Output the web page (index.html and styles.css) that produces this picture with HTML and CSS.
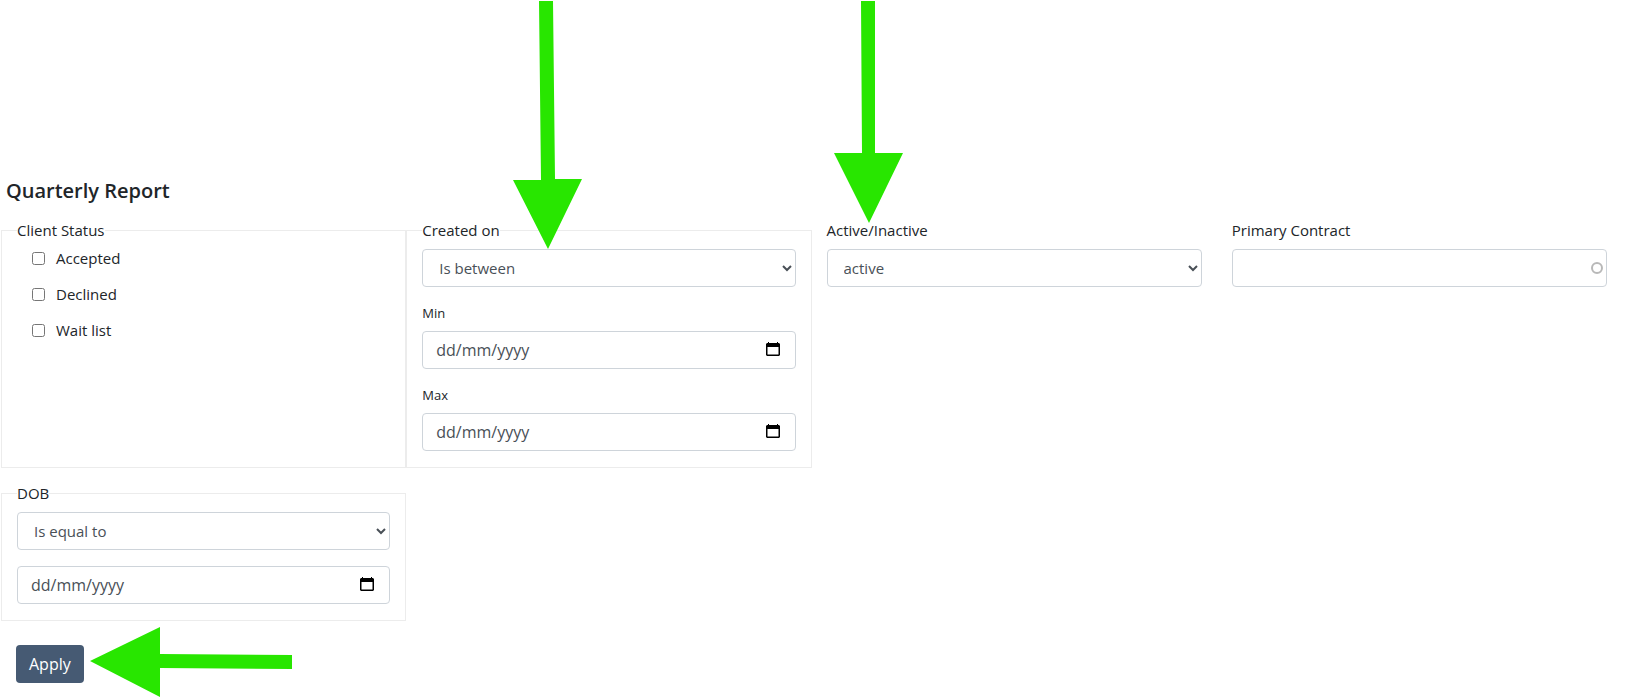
FILE: index.html
```html
<!DOCTYPE html>
<html lang="en-GB">
<head>
<meta charset="utf-8">
<title>Quarterly Report</title>
<link rel="stylesheet" href="styles.css">
</head>
<body>
<svg class="symbols" aria-hidden="true">
  <symbol id="calendar" viewBox="0 0 14 15">
    <path d="M2 0h1v1h8V0h1v1h1l1 1v11l-1 1H1l-1-1V2l1-1h1zM1.500 5v7.500h11V5z" fill="#000" fill-rule="evenodd"/>
  </symbol>
</svg>
<main class="report">
  <h1 class="report-title">Quarterly Report</h1>
  <form class="filters">
    <div class="filter-grid">
      <fieldset class="group">
        <legend class="caption">Client Status</legend>
        <div class="checks">
          <label class="check"><input class="check-box" type="checkbox">Accepted</label>
          <label class="check"><input class="check-box" type="checkbox">Declined</label>
          <label class="check"><input class="check-box" type="checkbox">Wait list</label>
        </div>
      </fieldset>

      <fieldset class="group">
        <legend class="caption">Created on</legend>
        <select class="control select" aria-label="Created on operator"><option>Is between</option></select>
        <label class="sub-label" for="created-min">Min</label>
        <div class="date">
          <input class="control date-text" id="created-min" type="text" placeholder="dd/mm/yyyy">
          <button class="date-button" type="button" aria-label="Choose minimum date"><svg class="date-icon"><use href="#calendar"/></svg></button>
        </div>
        <label class="sub-label" for="created-max">Max</label>
        <div class="date">
          <input class="control date-text" id="created-max" type="text" placeholder="dd/mm/yyyy">
          <button class="date-button" type="button" aria-label="Choose maximum date"><svg class="date-icon"><use href="#calendar"/></svg></button>
        </div>
      </fieldset>

      <div class="field">
        <label class="caption" for="active">Active/Inactive</label>
        <select class="control select" id="active"><option>active</option></select>
      </div>

      <div class="field">
        <label class="caption" for="contract">Primary Contract</label>
        <div class="lookup">
          <input class="control" id="contract" type="text">
          <span class="lookup-ring"></span>
        </div>
      </div>

      <fieldset class="group">
        <legend class="caption">DOB</legend>
        <select class="control select" aria-label="DOB operator"><option>Is equal to</option></select>
        <div class="date date-spaced">
          <input class="control date-text" type="text" placeholder="dd/mm/yyyy" aria-label="DOB">
          <button class="date-button" type="button" aria-label="Choose date of birth"><svg class="date-icon"><use href="#calendar"/></svg></button>
        </div>
      </fieldset>
    </div>
    <button class="apply" type="button">Apply</button>
  </form>
  <svg class="arrow arrow-created" viewBox="0 0 70 249" aria-hidden="true"><path d="M26 1H40L42 179H69L35 249L0 180H28z"/></svg>
  <svg class="arrow arrow-active" viewBox="0 0 70 223" aria-hidden="true"><path d="M27 1H41V153H69L35 223L0 153H28z"/></svg>
  <svg class="arrow arrow-apply" viewBox="0 0 202 70" aria-hidden="true"><path d="M0 34L70 0V27L202 28V42L70 41V70z"/></svg>
</main>
</body>
</html>
```
FILE: styles.css
```css
* { box-sizing: border-box; }

body {
  margin: 0;
  background: #fff;
  color: #212529;
  font: 15px/24px "Open Sans", "Noto Sans", sans-serif;
}

.symbols { display: none; }

.report {
  position: relative;
  padding: 176px 10px 15px 1px;
}

.report-title {
  margin: 0 0 12px;
  padding-left: 5px;
  font-size: 20px;
  line-height: 30px;
  font-weight: 600;
}

.filter-grid {
  display: grid;
  grid-template-columns: repeat(4, minmax(0, 1fr));
  row-gap: 13px;
}

.group {
  min-width: 0;
  margin: 0;
  padding: 4px 15px 16px;
  border: 1px solid #ececec;
}

.field { padding: 0 15px; }

.caption {
  display: block;
  padding: 0;
}

.field .caption { margin-bottom: 7px; }

.checks {
  display: flex;
  flex-direction: column;
  gap: 12px;
  padding-left: 15px;
}

.check {
  display: flex;
  align-items: center;
  gap: 11px;
}

.check-box {
  width: 13px;
  height: 13px;
  margin: 0;
}

.control {
  display: block;
  width: 100%;
  height: 38px;
  padding: 6px 13px;
  border: 1px solid #ced4da;
  border-radius: 4px;
  background: #fff;
  color: #495057;
  font: inherit;
}

.control::placeholder {
  color: #495057;
  opacity: 1;
}

.select { padding: 6px 12px; }

.group .select { margin-top: 3px; }

.date-text { font-size: 16px; }

.sub-label {
  display: block;
  margin: 16px 0 8px;
  font-size: 13px;
  line-height: 20px;
}

.date,
.lookup { position: relative; }

.date-spaced { margin-top: 16px; }

.date-button {
  position: absolute;
  top: 11px;
  right: 16px;
  display: flex;
  padding: 0;
  border: 0;
  background: none;
}

.date-icon {
  width: 14px;
  height: 15px;
}

.lookup-ring {
  position: absolute;
  top: 13px;
  right: 4px;
  width: 12px;
  height: 12px;
  border: 2px solid #b8b8b8;
  border-radius: 50%;
}

.apply {
  display: block;
  height: 38px;
  margin: 24px 0 0 15px;
  padding: 6px 13px;
  border: 0;
  border-radius: 4px;
  background: #465a73;
  color: #fff;
  font: inherit;
  font-size: 16px;
}

.arrow {
  position: absolute;
  fill: #28e600;
  pointer-events: none;
}

.arrow-created {
  top: 0;
  left: 513px;
  width: 70px;
  height: 249px;
}

.arrow-active {
  top: 0;
  left: 834px;
  width: 70px;
  height: 223px;
}

.arrow-apply {
  top: 627px;
  left: 90px;
  width: 202px;
  height: 70px;
}
```
